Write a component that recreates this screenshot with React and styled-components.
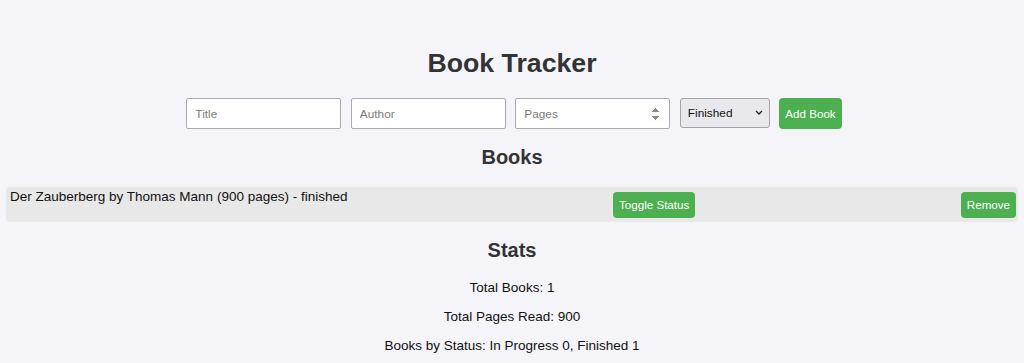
import React, { useState } from 'react'
import styled, { createGlobalStyle } from 'styled-components'

const GlobalStyle = createGlobalStyle`
  body {
    margin: 0;
    background-color: #f4f4f9;
    font-family: 'Liberation Sans', Arial, sans-serif;
    color: #333;
  }
`

const Page = styled.div`
  padding: 48px 6px 0;
  text-align: center;
`

const Title = styled.h1`
  margin: 0 0 19px;
  font-size: 26.7px;
  line-height: 31px;
  font-weight: bold;
`

const Form = styled.form`
  display: flex;
  justify-content: center;
  gap: 9.5px;
  margin-bottom: 17px;
  padding-left: 4px;
`

const Field = styled.input`
  box-sizing: border-box;
  width: 155px;
  height: 31px;
  padding: 0 6px 0 8px;
  border: 1px solid #a9a9b0;
  border-radius: 2px;
  background: #fff;
  font-family: 'Liberation Sans', Arial, sans-serif;
  font-size: 11.8px;
  color: #222;

  &::placeholder {
    color: #7a7a7a;
  }

  &::-webkit-inner-spin-button {
    opacity: 1;
  }
`

const SelectWrap = styled.div`
  position: relative;
  width: 90px;
  height: 30px;
`

const Select = styled.select`
  appearance: none;
  box-sizing: border-box;
  width: 100%;
  height: 100%;
  padding: 0 20px 0 7px;
  border: 1px solid #a3a3a8;
  border-radius: 3px;
  background: #e9e9ed;
  font-family: 'Liberation Sans', Arial, sans-serif;
  font-size: 11.8px;
  color: #111;
`

const Chevron = styled.svg`
  position: absolute;
  right: 7px;
  top: 12px;
  pointer-events: none;
`

const Button = styled.button`
  box-sizing: border-box;
  height: ${p => (p.$tall ? '31px' : '26px')};
  padding: 0 6px;
  border: none;
  border-radius: 4px;
  background: #4caf50;
  color: #fff;
  font-family: 'Liberation Sans', Arial, sans-serif;
  font-size: 11.6px;
  cursor: pointer;
`

const Heading = styled.h2`
  margin: 0 0 17.5px;
  font-size: 20px;
  line-height: 23px;
  font-weight: bold;
`

const List = styled.ul`
  list-style: none;
  margin: 0 0 17.5px;
  padding: 0;
`

const Item = styled.li`
  display: flex;
  justify-content: space-between;
  align-items: flex-start;
  padding: 5px 2px 4px 4px;
  background: #e8e8e8;
  border-radius: 4px;
  text-align: left;
`

const ItemText = styled.span`
  margin-top: -3px;
  font-size: 13.5px;
  line-height: 16px;
  color: #111;
`

const Stat = styled.p`
  margin: 0 0 13.6px;
  font-size: 13.5px;
  line-height: 15.4px;
  color: #111;
`

export default function App() {
  const [books] = useState([
    { title: 'Der Zauberberg', author: 'Thomas Mann', pages: 900, status: 'finished' },
  ])
  const finished = books.filter(b => b.status === 'finished').length
  const total = books.reduce((s, b) => s + b.pages, 0)

  return (
    <>
      <GlobalStyle />
      <Page>
        <Title>Book Tracker</Title>
        <Form onSubmit={e => e.preventDefault()}>
          <Field placeholder="Title" />
          <Field placeholder="Author" />
          <Field type="number" placeholder="Pages" />
          <SelectWrap>
            <Select defaultValue="finished">
              <option value="in-progress">In Progress</option>
              <option value="finished">Finished</option>
            </Select>
            <Chevron width="8" height="5" viewBox="0 0 8 5">
              <path d="M1 1l3 3 3-3" fill="none" stroke="#222" strokeWidth="1.3" />
            </Chevron>
          </SelectWrap>
          <Button $tall type="submit">Add Book</Button>
        </Form>

        <Heading>Books</Heading>
        <List>
          {books.map(b => (
            <Item key={b.title}>
              <ItemText>
                {b.title} by {b.author} ({b.pages} pages) - {b.status}
              </ItemText>
              <Button>Toggle Status</Button>
              <Button>Remove</Button>
            </Item>
          ))}
        </List>

        <Heading>Stats</Heading>
        <Stat>Total Books: {books.length}</Stat>
        <Stat>Total Pages Read: {total}</Stat>
        <Stat>Books by Status: In Progress {books.length - finished}, Finished {finished}</Stat>
      </Page>
    </>
  )
}
